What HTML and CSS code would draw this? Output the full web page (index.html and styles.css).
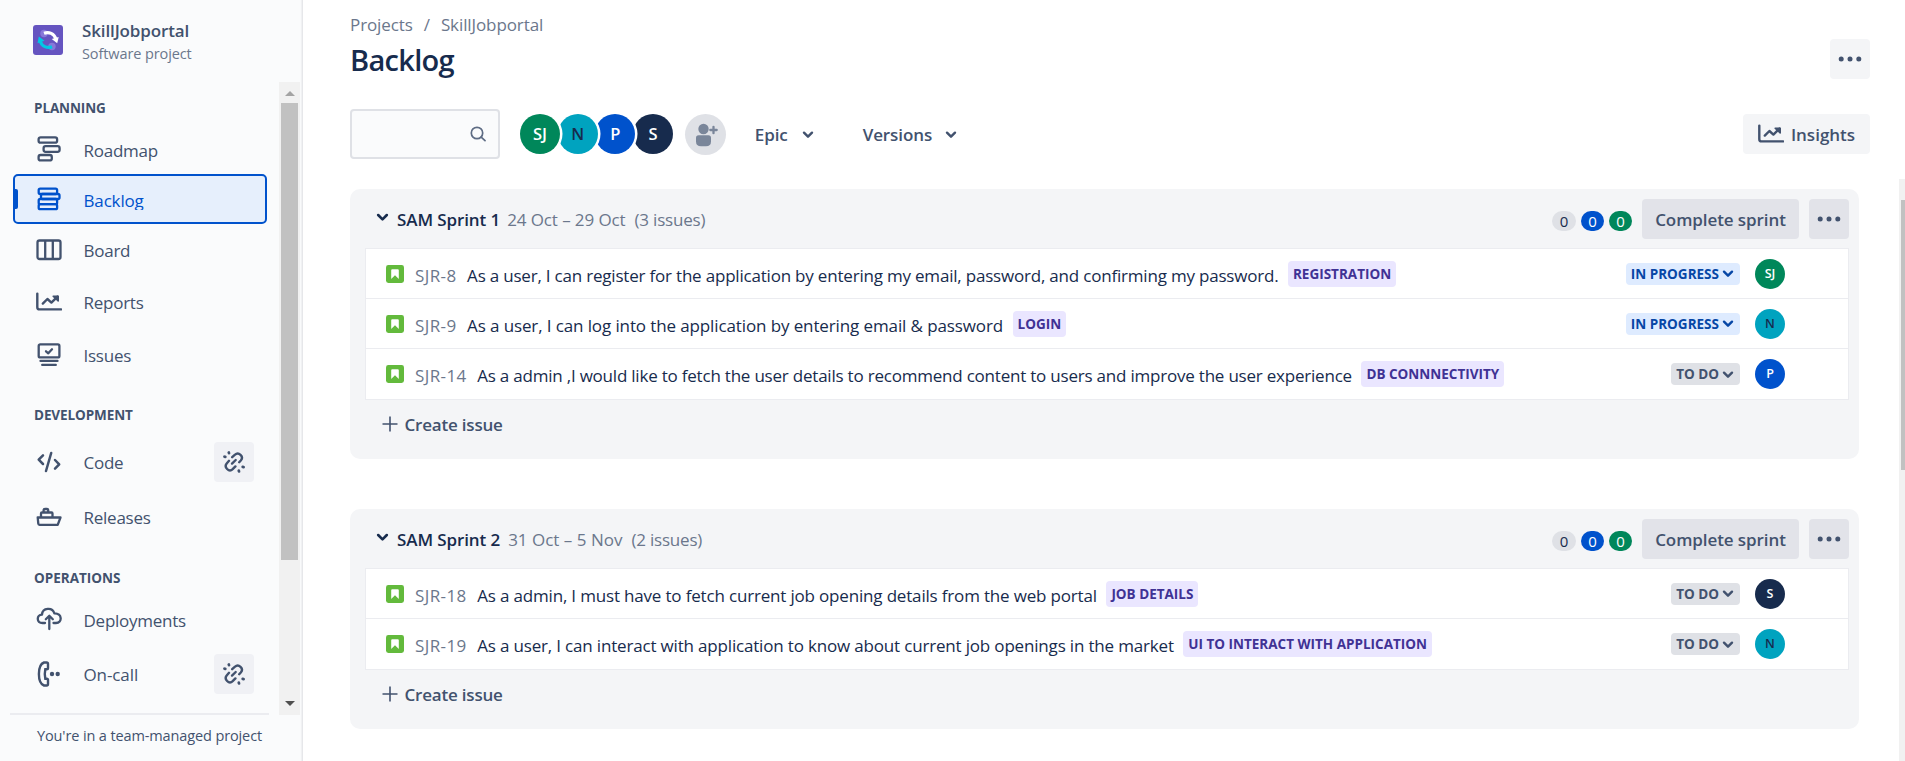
FILE: index.html
```html
<!DOCTYPE html>
<html lang="en">
<head>
<meta charset="utf-8">
<title>Backlog - SkillJobportal</title>
<link rel="stylesheet" href="styles.css">
</head>
<body>
<svg class="defs" aria-hidden="true">
  <symbol id="chart" viewBox="0 0 26 20"><g fill="none" stroke="currentColor" stroke-width="2.4" stroke-linecap="round" stroke-linejoin="round"><path d="M1.3 1.6V15.2Q1.3 17.4 3.5 17.4H25"/><path d="M6.8 11.600 11.400 7 15.400 10.600 21.500 4.600"/><path d="M17.200 4.200H22.200V9Z" fill="currentColor" stroke-width="1.600"/></g></symbol>
  <symbol id="down" viewBox="0 0 12 10"><path d="M2 2.7 6 6.7 10 2.7" fill="none" stroke="currentColor" stroke-width="2.4" stroke-linecap="round" stroke-linejoin="round"/></symbol>
  <symbol id="dots" viewBox="0 0 24 6"><g fill="currentColor"><circle cx="3.2" cy="3" r="2.5"/><circle cx="12" cy="3" r="2.5"/><circle cx="20.8" cy="3" r="2.5"/></g></symbol>
  <symbol id="unlink" viewBox="0 0 22 22"><g fill="none" stroke="currentColor" stroke-width="2.4" stroke-linecap="round"><path d="M9.200 6.200 12 3.700C15.6.3 21.200 5.600 17.800 9.500L16.200 11.200"/><path d="M6 9.800 3.900 12.200C.4 16.200 6 21.600 9.700 18.200L12.400 15.400"/><path d="M9 12.600 12.700 9"/><path d="M5.800 1.500 6 2.200M1.500 5.700 2.300 5.900M15.800 19.600 16 20.500M19.700 15.900 20.600 16.100" stroke-width="2.700"/></g></symbol>
  <symbol id="story" viewBox="0 0 18 18"><rect width="18" height="18" rx="2.400" fill="#63ba3c"/><path d="M5.200 5.200Q5.200 4.200 6.200 4.200H11.800Q12.800 4.200 12.800 5.200V14L9 10.300 5.200 14Z" fill="#fff"/></symbol>
  <symbol id="plus" viewBox="0 0 16 16"><path d="M8 .5V15.500M.5 8H15.500" stroke="currentColor" stroke-width="1.600"/></symbol>
</svg>
<div class="app">
  <aside class="sidebar">
    <header class="project">
      <svg class="logo" viewBox="0 0 30 30"><rect width="30" height="30" rx="3" fill="#6554c0"/><g fill="#8777d9"><circle cx="11" cy="8.500" r="3.700"/><circle cx="19" cy="21.500" r="3.700"/></g><path d="M11 8.200C16 6.300 21.200 8.700 22.700 13.600" fill="none" stroke="#fff" stroke-width="3.200"/><path d="M18.700 14 25.700 12 24.200 18.200Z" fill="#fff"/><path d="M19 21.700C14 23.700 8.800 21.300 7.300 16.400" fill="none" stroke="#00c7e5" stroke-width="3.200"/><path d="M4.500 18.200 5.800 11.500 11.500 15.800Z" fill="#00c7e5"/></svg>
      <div><div class="project-name">SkillJobportal</div><div class="project-type">Software project</div></div>
    </header>
    <div class="side-body">
      <nav class="nav">
        <h2 class="group first">PLANNING</h2>
        <a class="item roadmap"><svg class="icon" viewBox="0 0 26 26"><g fill="none" stroke="currentColor" stroke-width="2.300"><rect x="2.600" y="1.300" width="18.500" height="5.400" rx="2"/><rect x="7.600" y="10.200" width="16" height="5.600" rx="2"/><rect x="2.600" y="19" width="13.200" height="5.400" rx="2"/></g></svg><span>Roadmap</span></a>
        <a class="item active"><svg class="icon" viewBox="0 0 26 26"><g fill="none" stroke="currentColor" stroke-width="2.300"><rect x="2.700" y="2.600" width="18.400" height="5.400" rx="1.500"/><rect x="5" y="8" width="18.500" height="5" rx="1.500"/><rect x="2.700" y="13" width="18.400" height="5.200" rx="1.500"/><rect x="2.700" y="18.200" width="18.400" height="5" rx="1.500"/></g></svg><span>Backlog</span></a>
        <a class="item board"><svg class="icon" viewBox="0 0 26 26"><g fill="none" stroke="currentColor" stroke-width="2.300"><rect x="1.500" y="3.500" width="23" height="18.500" rx="2"/><path d="M9.200 4V22M16.800 4V22"/></g></svg><span>Board</span></a>
        <a class="item reports"><svg class="icon chart"><use href="#chart"/></svg><span>Reports</span></a>
        <a class="item issues"><svg class="icon" viewBox="0 0 26 26"><g fill="none" stroke="currentColor" stroke-width="2.300" stroke-linecap="round" stroke-linejoin="round"><rect x="2.700" y="2.400" width="20.700" height="13" rx="1.500"/><path d="M10 9.300 12.300 11.300 16 7.300"/><path d="M4.500 18.900H21.500M6.200 22.900H19.800"/></g></svg><span>Issues</span></a>
        <h2 class="group">DEVELOPMENT</h2>
        <a class="item code"><svg class="icon" viewBox="0 0 26 26"><g fill="none" stroke="currentColor" stroke-width="2.500" stroke-linecap="round" stroke-linejoin="round"><path d="M7 6.300 2.700 10.700 7 15M15.200 4 10 22M19 11 23.200 15.300 19 19.700"/></g></svg><span>Code</span><b class="connect"><svg><use href="#unlink"/></svg></b></a>
        <a class="item releases"><svg class="icon" viewBox="0 0 26 26"><g fill="none" stroke="currentColor" stroke-width="2.300" stroke-linejoin="round"><path d="M1.700 13.500H24.500L21.700 20.800H3.500Q2.400 20.800 2.300 19.700Z"/><path d="M5 13V9.500Q5 8.500 6 8.500H15.500Q16.500 8.500 16.500 9.500V13M7.600 8.500V6.300Q7.600 5 9 5H11Q12.200 5 12.200 6.300V8.500"/></g></svg><span>Releases</span></a>
        <h2 class="group ops">OPERATIONS</h2>
        <a class="item deployments"><svg class="icon" viewBox="0 0 26 26"><g fill="none" stroke="currentColor" stroke-width="2.300" stroke-linecap="round" stroke-linejoin="round"><path d="M9 17H6.500C.4 17 .2 9 6 8.600 6.500 1.500 16.500 1 18.300 7.300 26.500 7 26.500 17 20 17H17.500"/><path d="M13.300 23V10.500M9.800 13.300 13.300 9.800 16.800 13.300"/></g></svg><span>Deployments</span></a>
        <a class="item oncall"><svg class="icon" viewBox="0 0 26 26"><path d="M8 1.500H10.600Q12 1.500 12 3V7Q12 8.300 10.700 8.300H9.300Q8.300 13 9.300 17.700H10.700Q12 17.700 12 19V23Q12 24.500 10.600 24.500H8C1.200 22 1.200 4 8 1.500Z" fill="none" stroke="currentColor" stroke-width="2.400"/><circle cx="16" cy="13" r="2.200" fill="currentColor"/><circle cx="21.700" cy="13" r="2.200" fill="currentColor"/></svg><span>On-call</span><b class="connect"><svg><use href="#unlink"/></svg></b></a>
        <hr>
      </nav>
      <div class="scroll"><i class="up"></i><i class="thumb"></i><i class="dn"></i></div>
    </div>
    <footer class="managed">You're in a team-managed project</footer>
  </aside>
  <main class="main">
    <div class="crumbs"><span>Projects</span><span>/</span><span>SkillJobportal</span></div>
    <div class="title-row"><h1>Backlog</h1><button class="square light"><svg class="dots"><use href="#dots"/></svg></button></div>
    <div class="toolbar">
      <div class="search"><svg viewBox="0 0 16 16"><g fill="none" stroke="currentColor" stroke-width="1.700" stroke-linecap="round"><circle cx="7" cy="7" r="5.700"/><path d="M11.200 11.200 15 14.700"/></g></svg></div>
      <div class="people"><span class="avatar green">SJ</span><span class="avatar teal">N</span><span class="avatar blue">P</span><span class="avatar navy">S</span></div>
      <span class="add"><svg viewBox="0 0 23 24"><g fill="currentColor"><circle cx="8.500" cy="6" r="5.200"/><path d="M1 14.800Q1 12.200 3.600 12.200H13.400Q16 12.200 16 14.800V18.500Q16 23.300 11 23.300H6Q1 23.300 1 18.500Z"/></g><path d="M18.500 3.800V10.200M15.300 7H21.700" stroke="currentColor" stroke-width="2.300" stroke-linecap="round"/></svg></span>
      <span class="filter epic">Epic<svg class="down"><use href="#down"/></svg></span>
      <span class="filter versions">Versions<svg class="down"><use href="#down"/></svg></span>
      <button class="insights light"><svg class="chart"><use href="#chart"/></svg><span>Insights</span></button>
    </div>
    <div class="content">
      <div class="sprints">
        <section class="sprint one">
          <header class="head"><svg class="down"><use href="#down"/></svg><h3>SAM Sprint 1</h3><span class="dates">24 Oct – 29 Oct</span><span class="count">(3 issues)</span>
            <div class="badges"><em class="badge">0</em><em class="badge blue">0</em><em class="badge green">0</em></div><button class="complete">Complete sprint</button><button class="square"><svg class="dots"><use href="#dots"/></svg></button></header>
          <div class="list">
            <div class="row"><svg class="story"><use href="#story"/></svg><span class="key">SJR-8</span><span class="summary">As a user, I can register for the application by entering my email, password, and confirming my password.</span><span class="tag">REGISTRATION</span><span class="status progress">IN PROGRESS<svg class="down"><use href="#down"/></svg></span><span class="avatar small green">SJ</span></div>
            <div class="row"><svg class="story"><use href="#story"/></svg><span class="key">SJR-9</span><span class="summary">As a user, I can log into the application by entering email &amp; password</span><span class="tag">LOGIN</span><span class="status progress">IN PROGRESS<svg class="down"><use href="#down"/></svg></span><span class="avatar small teal">N</span></div>
            <div class="row"><svg class="story"><use href="#story"/></svg><span class="key">SJR-14</span><span class="summary">As a admin ,I would like to fetch the user details to recommend content to users and improve the user experience</span><span class="tag">DB CONNNECTIVITY</span><span class="status">TO DO<svg class="down"><use href="#down"/></svg></span><span class="avatar small blue">P</span></div>
          </div>
          <div class="create"><svg><use href="#plus"/></svg><span>Create issue</span></div>
        </section>
        <section class="sprint two">
          <header class="head"><svg class="down"><use href="#down"/></svg><h3>SAM Sprint 2</h3><span class="dates">31 Oct – 5 Nov</span><span class="count">(2 issues)</span>
            <div class="badges"><em class="badge">0</em><em class="badge blue">0</em><em class="badge green">0</em></div><button class="complete">Complete sprint</button><button class="square"><svg class="dots"><use href="#dots"/></svg></button></header>
          <div class="list">
            <div class="row"><svg class="story"><use href="#story"/></svg><span class="key">SJR-18</span><span class="summary">As a admin, I must have to fetch current job opening details from the web portal</span><span class="tag">JOB DETAILS</span><span class="status">TO DO<svg class="down"><use href="#down"/></svg></span><span class="avatar small navy">S</span></div>
            <div class="row"><svg class="story"><use href="#story"/></svg><span class="key">SJR-19</span><span class="summary">As a user, I can interact with application to know about current job openings in the market</span><span class="tag">UI TO INTERACT WITH APPLICATION</span><span class="status">TO DO<svg class="down"><use href="#down"/></svg></span><span class="avatar small teal">N</span></div>
          </div>
          <div class="create"><svg><use href="#plus"/></svg><span>Create issue</span></div>
        </section>
      </div>
      <div class="page-scroll"><i></i></div>
    </div>
  </main>
</div>
</body>
</html>
```
FILE: styles.css
```css
*{box-sizing:border-box}
body{margin:0;background:#fff;color:#172b4d;font:17px/24px "Open Sans","Noto Sans",sans-serif;overflow:hidden}
h1,h2,h3{margin:0}
svg{display:block;flex:none}
button{border:0;border-radius:4px;background:#e2e3e9;color:#42526e;font:550 17px/24px "Open Sans","Noto Sans",sans-serif;display:flex;align-items:center;justify-content:center;padding:0}
.defs{width:0;height:0;position:absolute}
.app{display:flex;height:761px}

/* Sidebar */
.sidebar{width:303px;flex:none;background:#fafbfc;border-right:1px solid #e6e7ea;box-shadow:inset -2px 0 1px -1px #eff0f2;color:#42526e;display:flex;flex-direction:column}
.project{height:82px;display:flex;padding:18px 0 0 33px;gap:19px}
.logo{width:30px;height:30px;margin-top:7px}
.project-name{font-weight:600;letter-spacing:-.13px;line-height:25px}
.project-type{font-size:14.5px;line-height:22px;letter-spacing:-.1px;color:#6b778c}
.side-body{height:633px;display:flex;justify-content:space-between}
.nav{width:259px;margin-left:10px}
.group{font-size:13.5px;line-height:20px;height:42px;padding:16px 0 0 24px;font-weight:700;letter-spacing:-.1px}
.group:not(.first){height:55px;padding-top:25px}
.group.ops{height:48px;padding-top:24px;letter-spacing:0}
.item{display:flex;align-items:center;width:254px;height:50px;margin-left:3px;padding-left:23px;letter-spacing:-.25px}
.item span{margin-left:22px;padding-top:2px}
.roadmap span{padding-top:3px}
.item.active{position:relative;border:2px solid #0052cc;border-radius:5px;background:#e6effc;color:#0052cc;padding-left:21px;letter-spacing:-.15px}
.item.active::before{content:"";position:absolute;left:-1px;top:13px;width:4px;height:20px;background:#0052cc;border-radius:0 2px 2px 0}
.item.active span{height:22px;padding:0;line-height:25px;overflow:hidden}
.icon{width:26px;height:26px;margin-left:-.5px}
.icon.chart{height:20px}
.board{height:51px}.reports{height:53px}.issues{height:52px;padding-top:1px}
.code,.deployments{height:54px}.releases{height:55px}.oncall{height:56px}
.deployments span{padding-top:3px}
.connect{width:40px;height:40px;margin-left:auto;margin-right:13px;border-radius:4px;background:#f0f1f5;display:grid;place-items:center}
.connect svg{width:22px;height:22px}
.oncall span{letter-spacing:-.1px}
hr{height:2px;margin:11px 0 0;border:0;background:#ebecf0}
.scroll{width:21px;margin-right:2px;background:#f1f1f1;display:flex;flex-direction:column;align-items:center}
.scroll i{flex:none}
.up{height:5px;margin-top:9px;border:5px solid transparent;border-top:0;border-bottom-color:#a3a3a3}
.thumb{width:17px;height:457px;margin-top:7px;background:#c1c1c1}
.dn{height:5px;margin-top:141px;border:5px solid transparent;border-bottom:0;border-top-color:#505050}
.managed{padding:9px 0 0 37px;font-size:14.5px;line-height:24px;letter-spacing:-.12px;white-space:nowrap}

/* Page header */
.main{flex:1;padding-left:47px;display:flex;flex-direction:column;min-width:0}
.crumbs{display:flex;height:39px;padding-top:13px;color:#6b778c;letter-spacing:-.1px}
.crumbs span+span{margin-left:11px}
.title-row{height:70px;display:flex;justify-content:space-between;align-items:flex-start;padding-right:35px}
h1{font-size:29px;line-height:40px;font-weight:600;letter-spacing:-.7px;padding-top:1px}
.light{background:#f4f5f7}
.square{width:40px;height:40px}
.dots{width:24px;height:6px}
.toolbar{height:70px;display:flex;align-items:flex-start;padding-right:35px}
.search{width:150px;height:50px;border:2px solid #dfe1e6;border-radius:4px;background:#fafbfc;color:#5e6c84;padding:15px 0 0 118px}
.search svg{width:16px;height:16px}
.people{display:flex;margin:5px 0 0 20px}
.avatar{width:40px;height:40px;border-radius:50%;display:grid;place-items:center;color:#fff;font-size:16.5px;font-weight:600;line-height:20px;flex:none}
.people .avatar{box-shadow:0 0 0 2.5px #fff;position:relative;margin-right:-2.3px}
.people .avatar:nth-child(1){z-index:4}.people .avatar:nth-child(2){z-index:3}.people .avatar:nth-child(3){z-index:2}
.green{background:#00875a}.teal{background:#00a3bf}.blue{background:#0052cc}.navy{background:#172b4d}
.avatar.teal{color:#172b4d}
.add{width:41px;height:41px;margin:5px 0 0 14px;border-radius:50%;background:#dfe1e6;color:#7a869a;display:grid;place-items:center}
.add svg{width:23px;height:24px;margin-left:2px}
.down{width:12px;height:10px}
.filter{height:50px;display:flex;align-items:center;color:#42526e;font-weight:550;letter-spacing:-.1px;padding-top:2px}
.filter .down{margin:-1px 0 0 14px}
.epic{margin-left:29px}.versions{margin-left:49px}
.versions .down{margin-left:13px}
.insights{width:127px;height:40px;margin:5px 0 0 auto}
.insights .chart{width:26px;height:20px}
.insights span{margin-left:7px;padding-top:2px}

/* Sprints */
.content{height:582px;display:flex;justify-content:space-between}
.sprints{width:1509px;padding-top:10px}
.sprint{height:270px;padding:0 10px 0 15px;border-radius:10px;background:#f4f5f7}
.two{height:220px;margin-top:50px}
.head{height:59px;display:flex;align-items:center;padding-left:11px}
.head .down{width:13px;height:11px;margin:-2px 8px 0 0}
.head h3,.dates,.count{line-height:24px;padding-top:3px;white-space:nowrap}
h3{font-size:17px;font-weight:600;letter-spacing:-.1px}
.dates,.count{color:#6b778c;letter-spacing:-.1px}
.dates{margin-left:7px}.count{margin-left:9px;letter-spacing:-.2px}
.two .dates{margin-left:8px;letter-spacing:0}
.badges{display:flex;gap:5px;margin-left:auto;padding-top:4px}
.badge{min-width:23px;height:20px;border-radius:10px;background:#dfe1e6;font-size:15px;line-height:21px;font-style:normal;text-align:center}
.badge:first-child{width:24px}
.badge.blue,.badge.green{color:#fff}
.badge.blue{background:#0052cc}.badge.green{background:#00875a}
.complete{width:157px;height:40px;margin:0 10px;letter-spacing:-.08px;padding-top:2px}
.list{width:1484px;border:1px solid #ebecf0;background:#fff}
.row{height:50px;display:flex;align-items:center;padding:0 63px 0 20px;white-space:nowrap}
.row:not(:last-child){border-bottom:1px solid #ebecf0}
.story{width:18px;height:18px}
.key,.summary{padding-top:4px}
.key{margin-left:11px;color:#6b778c;letter-spacing:.4px}
.summary{margin-left:10.5px;letter-spacing:-.2px}
.one .row:nth-child(2) .summary{letter-spacing:-.115px}
.one .row:nth-child(3) .summary{letter-spacing:-.213px}
.two .row .summary{letter-spacing:-.175px}
.tag{height:26px;margin-left:9.5px;padding:0 5px;border-radius:4px;background:#eae6ff;color:#403294;font-size:13.5px;font-weight:700;line-height:26px}
.status{height:22px;margin:0 15px 0 auto;padding:0 6px 0 5px;border-radius:4px;background:#dfe1e6;color:#42526e;font-size:13.5px;font-weight:700;line-height:22px;display:flex;align-items:center}
.status .down{margin:1px 0 0 3px}
.progress{background:#deebff;color:#0747a6}
.avatar.small{width:30px;height:30px;font-size:12.5px}
.create{display:flex;align-items:center;height:48px;padding-left:16.5px;color:#42526e;font-weight:550;letter-spacing:-.2px}
.create svg{width:16px;height:16px}
.create span{margin-left:7px;padding-top:2px}
.page-scroll{width:6px;height:582px;padding:21px 0 0 2px;background:#f1f1f1}
.page-scroll i{display:block;height:270px;background:#c1c1c1}
```
